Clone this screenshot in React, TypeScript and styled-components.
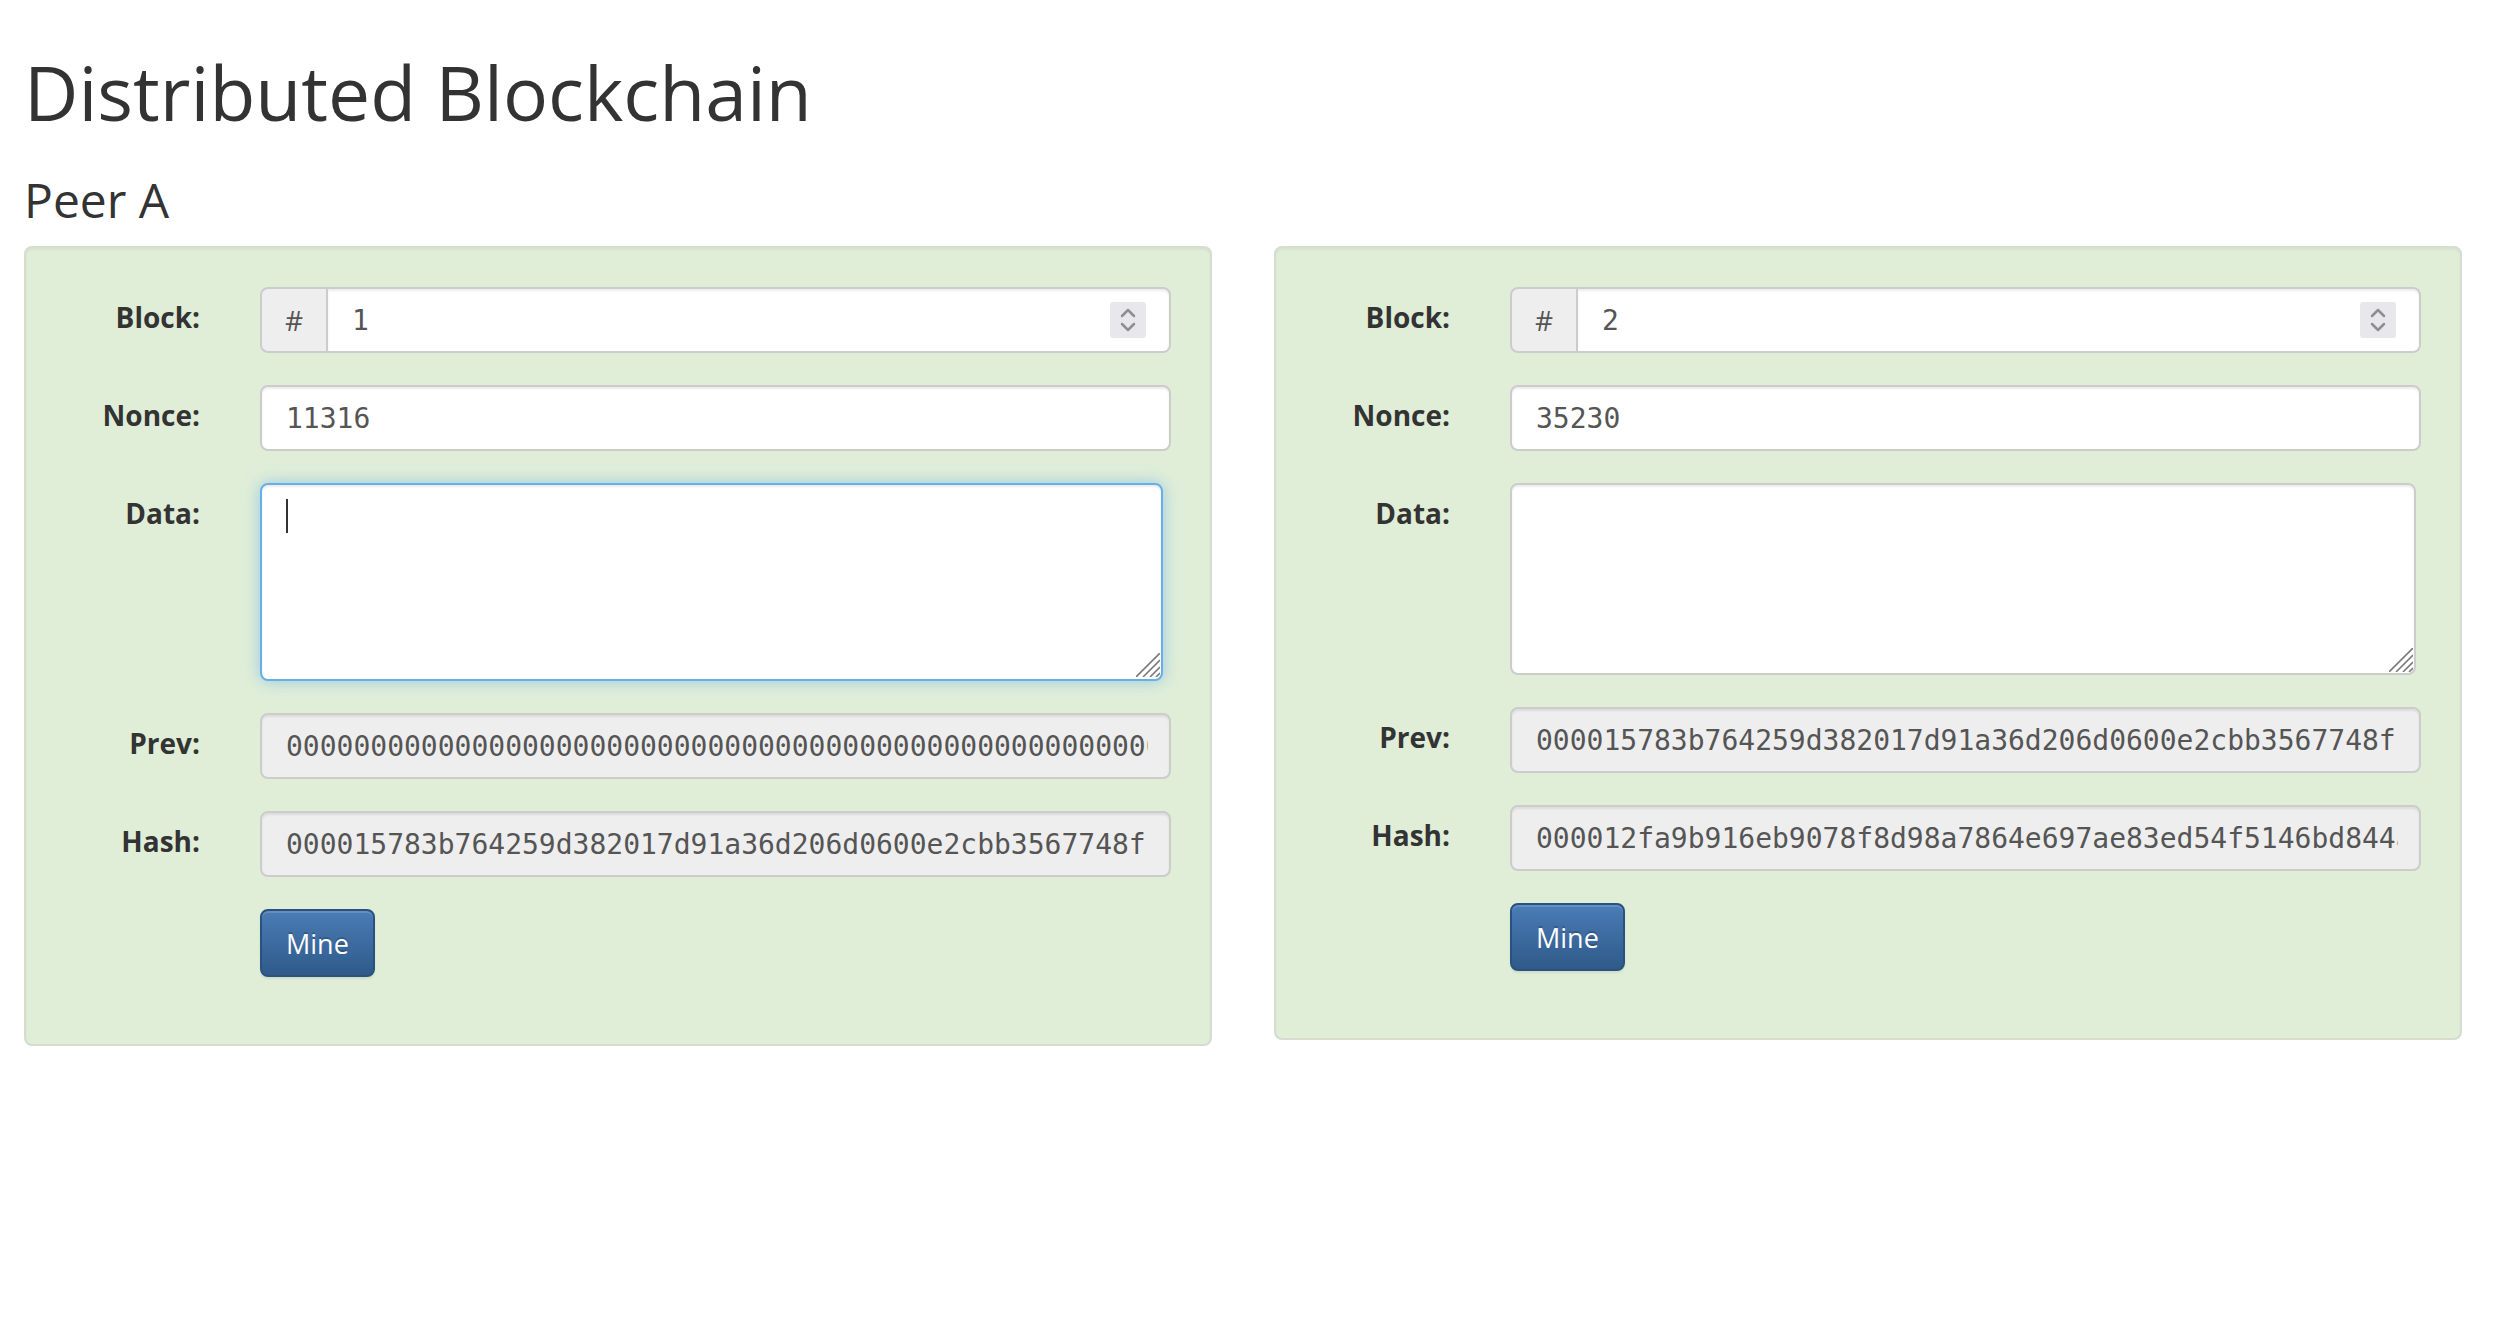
import React from "react";
import styled, { createGlobalStyle } from "styled-components";

const GlobalStyle = createGlobalStyle`
  html, body {
    margin: 0;
    padding: 0;
    background: #ffffff;
  }
  body {
    font-family: "Open Sans", "Liberation Sans", sans-serif;
    color: #333333;
  }
  *, *::before, *::after {
    box-sizing: border-box;
  }
`;

const Page = styled.div`
  width: 2506px;
  padding: 0 44px 0 24px;
`;

const Title = styled.h1`
  margin: 51px 0 0;
  font-size: 75px;
  line-height: 82px;
  font-weight: 400;
  color: #333333;
`;

const PeerTitle = styled.h3`
  margin: 40px 0 20px;
  font-size: 48px;
  line-height: 53px;
  font-weight: 400;
  color: #333333;
`;

const Columns = styled.div`
  display: grid;
  grid-template-columns: 1188px 1188px;
  column-gap: 62px;
  align-items: start;
`;

const Panel = styled.div`
  display: flex;
  flex-direction: column;
  gap: 32px;
  padding: 39px 39px 67px;
  background: #e0eed8;
  border: 2px solid #d5ddd0;
  border-radius: 8px;
  box-shadow: inset 0 2px 2px rgba(0, 0, 0, 0.05);
`;

const FormRow = styled.div`
  display: grid;
  grid-template-columns: 135px 1fr;
  column-gap: 60px;
  align-items: start;
`;

const Label = styled.label`
  padding-top: 10px;
  text-align: right;
  font-size: 28px;
  line-height: 40px;
  font-weight: 700;
  color: #333333;
`;

const TextInput = styled.input<{ $readOnly?: boolean }>`
  display: block;
  width: 100%;
  height: 66px;
  padding: 0 21px 0 24px;
  font-family: "DejaVu Sans Mono", "Liberation Mono", monospace;
  font-size: 28px;
  color: #555555;
  background: ${(p) => (p.$readOnly ? "#eeeeee" : "#ffffff")};
  border: 2px solid #cccccc;
  border-radius: 8px;
  box-shadow: inset 0 2px 2px rgba(0, 0, 0, 0.075);
  outline: none;
`;

const InputGroup = styled.div`
  display: flex;
  height: 66px;
`;

const Addon = styled.span`
  flex: none;
  width: 68px;
  display: flex;
  align-items: center;
  justify-content: center;
  background: #eeeeee;
  border: 2px solid #cccccc;
  border-radius: 8px 0 0 8px;
  font-size: 28px;
  color: #555555;
`;

const GroupField = styled.div`
  flex: 1;
  display: flex;
  align-items: center;
  padding: 0 23px 0 24px;
  background: #ffffff;
  border: 2px solid #cccccc;
  border-left: none;
  border-radius: 0 8px 8px 0;
  box-shadow: inset 0 2px 2px rgba(0, 0, 0, 0.075);
`;

const BareInput = styled.input`
  flex: 1;
  min-width: 0;
  padding: 0;
  border: none;
  outline: none;
  background: transparent;
  font-family: "DejaVu Sans Mono", "Liberation Mono", monospace;
  font-size: 28px;
  color: #555555;
`;

const Spinner = styled.span`
  flex: none;
  width: 36px;
  height: 36px;
  display: flex;
  background: #e8e8ec;
  border-radius: 3px;
`;

const AreaWrap = styled.div<{ $inset: number }>`
  position: relative;
  width: calc(100% - ${(p) => p.$inset}px);
`;

const DataArea = styled.textarea<{ $focused?: boolean; $height: number }>`
  display: block;
  width: 100%;
  height: ${(p) => p.$height}px;
  padding: 12px 24px;
  font-family: "DejaVu Sans Mono", "Liberation Mono", monospace;
  font-size: 28px;
  line-height: 40px;
  color: #555555;
  background: #ffffff;
  border: 2px solid ${(p) => (p.$focused ? "#66afe9" : "#cccccc")};
  border-radius: 8px;
  outline: none;
  resize: none;
  box-shadow: ${(p) =>
    p.$focused
      ? "inset 0 2px 2px rgba(0,0,0,0.075), 0 0 16px rgba(102,175,233,0.6)"
      : "inset 0 2px 2px rgba(0,0,0,0.075)"};
`;

const Caret = styled.span`
  position: absolute;
  left: 26px;
  top: 16px;
  width: 2px;
  height: 34px;
  background: #333333;
`;

const Grip = styled.span<{ $bottom: number }>`
  position: absolute;
  right: 3px;
  bottom: ${(p) => p.$bottom}px;
  width: 24px;
  height: 24px;
  display: flex;
  pointer-events: none;
`;

const MineButton = styled.button`
  justify-self: start;
  height: 68px;
  padding: 0 24px;
  font-family: "Open Sans", "Liberation Sans", sans-serif;
  font-size: 27px;
  color: #ffffff;
  background-image: linear-gradient(to bottom, #4a7cb6 0%, #2f5a8a 100%);
  border: 2px solid #2a5281;
  border-radius: 8px;
  box-shadow: inset 0 2px 0 rgba(255, 255, 255, 0.15), 0 2px 2px rgba(0, 0, 0, 0.075);
  text-shadow: 0 -2px 0 rgba(0, 0, 0, 0.2);
  cursor: pointer;
`;

const SpinIcon = () => (
  <svg width="36" height="36" viewBox="0 0 36 36" fill="none">
    <polyline points="12,14 18,8 24,14" stroke="#8e8e93" strokeWidth="2.5" strokeLinecap="round" strokeLinejoin="round" />
    <polyline points="12,22 18,28 24,22" stroke="#8e8e93" strokeWidth="2.5" strokeLinecap="round" strokeLinejoin="round" />
  </svg>
);

const GripIcon = () => (
  <svg width="24" height="24" viewBox="0 0 24 24" fill="none">
    <line x1="24" y1="0" x2="0" y2="24" stroke="#7a7a7a" strokeWidth="1.6" />
    <line x1="24" y1="7" x2="7" y2="24" stroke="#7a7a7a" strokeWidth="1.6" />
    <line x1="24" y1="14" x2="14" y2="24" stroke="#7a7a7a" strokeWidth="1.6" />
    <line x1="24" y1="20" x2="20" y2="24" stroke="#7a7a7a" strokeWidth="1.6" />
  </svg>
);

type BlockData = {
  block: string;
  nonce: string;
  prev: string;
  hash: string;
  focused: boolean;
  areaInset: number;
  areaHeight: number;
  gripBottom: number;
};

const blocks: BlockData[] = [
  {
    block: "1",
    nonce: "11316",
    prev: "0000000000000000000000000000000000000000000000000000000000000000",
    hash: "000015783b764259d382017d91a36d206d0600e2cbb3567748fc3a1e9d0b2f47",
    focused: true,
    areaInset: 8,
    areaHeight: 198,
    gripBottom: 4,
  },
  {
    block: "2",
    nonce: "35230",
    prev: "000015783b764259d382017d91a36d206d0600e2cbb3567748fc3a1e9d0b2f47",
    hash: "000012fa9b916eb9078f8d98a7864e697ae83ed54f5146bd844a6e7c2d9f1b05",
    focused: false,
    areaInset: 5,
    areaHeight: 192,
    gripBottom: 3,
  },
];

const BlockCard = ({ data }: { data: BlockData }) => (
  <Panel>
    <FormRow>
      <Label>Block:</Label>
      <InputGroup>
        <Addon>#</Addon>
        <GroupField>
          <BareInput type="text" defaultValue={data.block} />
          <Spinner>
            <SpinIcon />
          </Spinner>
        </GroupField>
      </InputGroup>
    </FormRow>
    <FormRow>
      <Label>Nonce:</Label>
      <TextInput type="text" defaultValue={data.nonce} />
    </FormRow>
    <FormRow>
      <Label>Data:</Label>
      <AreaWrap $inset={data.areaInset}>
        <DataArea rows={4} defaultValue="" $focused={data.focused} $height={data.areaHeight} />
        {data.focused && <Caret />}
        <Grip $bottom={data.gripBottom}>
          <GripIcon />
        </Grip>
      </AreaWrap>
    </FormRow>
    <FormRow>
      <Label>Prev:</Label>
      <TextInput type="text" readOnly $readOnly defaultValue={data.prev} />
    </FormRow>
    <FormRow>
      <Label>Hash:</Label>
      <TextInput type="text" readOnly $readOnly defaultValue={data.hash} />
    </FormRow>
    <FormRow>
      <span />
      <MineButton type="button">Mine</MineButton>
    </FormRow>
  </Panel>
);

export default function App() {
  return (
    <>
      <GlobalStyle />
      <Page>
        <Title>Distributed Blockchain</Title>
        <PeerTitle>Peer A</PeerTitle>
        <Columns>
          {blocks.map((b) => (
            <BlockCard key={b.block} data={b} />
          ))}
        </Columns>
      </Page>
    </>
  );
}
